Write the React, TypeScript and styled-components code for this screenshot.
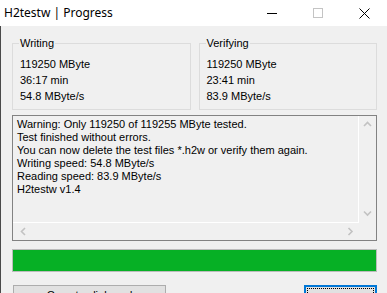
import React from 'react';
import styled, { createGlobalStyle } from 'styled-components';

const GlobalStyle = createGlobalStyle`
  html, body {
    margin: 0;
    padding: 0;
    background: #f0f0f0;
  }
  body {
    font-family: "Liberation Sans", Arial, sans-serif;
    font-size: 11px;
    color: #000;
  }
`;

const Window = styled.div`
  width: 387px;
  height: 293px;
  overflow: hidden;
  display: flex;
  flex-direction: column;
  background: #f0f0f0;
`;

const TitleBar = styled.div`
  height: 26px;
  flex: none;
  background: #fff;
  display: flex;
  align-items: center;
`;

const Title = styled.div`
  flex: 1;
  padding-left: 4px;
  font-family: "Noto Sans", "Open Sans", sans-serif;
  font-size: 12px;
  line-height: 26px;
  color: #000;
`;

const CaptionButton = styled.div`
  width: 46px;
  height: 26px;
  display: flex;
  align-items: center;
  justify-content: center;
`;

const Body = styled.div`
  flex: 1;
  border-left: 1px solid #4a4a4a;
  padding: 17px 10px 0 11px;
  display: flex;
  flex-direction: column;
`;

const GroupRow = styled.div`
  display: flex;
  gap: 8px;
`;

const Group = styled.div<{ $w: number }>`
  position: relative;
  width: ${(p) => p.$w}px;
  height: 67px;
  box-sizing: border-box;
  border: 1px solid #dcdcdc;
  padding: 12px 0 0 7px;
`;

const GroupLabel = styled.span`
  position: absolute;
  top: -8px;
  left: 6px;
  padding: 0 1px;
  background: #f0f0f0;
  line-height: 15px;
`;

const Line = styled.div`
  line-height: 16px;
  white-space: nowrap;
`;

const LogBox = styled.div`
  margin-top: 5px;
  height: 126px;
  box-sizing: border-box;
  border: 1px solid #828282;
  display: grid;
  grid-template-columns: 1fr 17px;
  grid-template-rows: 1fr 17px;
`;

const LogText = styled.div`
  padding: 2px 0 0 4px;
  border-right: 1px solid #fff;
  border-bottom: 1px solid #fff;
  overflow: hidden;
`;

const LogLine = styled.div`
  line-height: 13px;
  white-space: nowrap;
`;

const VScroll = styled.div`
  display: flex;
  flex-direction: column;
  justify-content: space-between;
  align-items: center;
  padding: 5px 0 6px;
`;

const HScroll = styled.div`
  display: flex;
  justify-content: space-between;
  align-items: center;
  padding: 0 5px 0 7px;
`;

const Progress = styled.div`
  margin-top: 8px;
  height: 23px;
  box-sizing: border-box;
  border: 1px solid #bcbcbc;
  background: #06b025;
`;

const ButtonRow = styled.div`
  margin-top: 13px;
  display: flex;
  justify-content: space-between;
  padding-left: 1px;
`;

const Button = styled.div<{ $w: number; $focus?: boolean }>`
  width: ${(p) => p.$w}px;
  height: 23px;
  box-sizing: border-box;
  background: #e1e1e1;
  border: ${(p) => (p.$focus ? '2px solid #0078d7' : '1px solid #adadad')};
  padding: ${(p) => (p.$focus ? '1px' : '0')};
  display: flex;
`;

const ButtonFace = styled.div<{ $focus?: boolean }>`
  flex: 1;
  border: 1px ${(p) => (p.$focus ? 'dotted #000' : 'solid transparent')};
  text-align: center;
  line-height: 17px;
`;

const Chevron = ({ dir }: { dir: 'up' | 'down' | 'left' | 'right' }) => {
  const paths = {
    up: 'M1 5 L4.5 1.5 L8 5',
    down: 'M1 1.5 L4.5 5 L8 1.5',
    left: 'M5 1 L1.5 4.5 L5 8',
    right: 'M1.5 1 L5 4.5 L1.5 8',
  };
  const horiz = dir === 'up' || dir === 'down';
  return (
    <svg width={horiz ? 9 : 7} height={horiz ? 7 : 9} viewBox={horiz ? '0 0 9 7' : '0 0 7 9'}>
      <path d={paths[dir]} fill="none" stroke="#c2c2c2" strokeWidth="1.6" />
    </svg>
  );
};

const log = [
  'Warning: Only 119250 of 119255 MByte tested.',
  'Test finished without errors.',
  'You can now delete the test files *.h2w or verify them again.',
  'Writing speed: 54.8 MByte/s',
  'Reading speed: 83.9 MByte/s',
  'H2testw v1.4',
];

export default function App() {
  return (
    <Window>
      <GlobalStyle />
      <TitleBar>
        <Title>H2testw | Progress</Title>
        <CaptionButton>
          <svg width="10" height="10" viewBox="0 0 10 10">
            <path d="M0 5.5 H10" stroke="#000" strokeWidth="1" />
          </svg>
        </CaptionButton>
        <CaptionButton>
          <svg width="10" height="10" viewBox="0 0 10 10">
            <rect x="0.5" y="0.5" width="9" height="9" fill="none" stroke="#c4c4c4" strokeWidth="1" />
          </svg>
        </CaptionButton>
        <CaptionButton>
          <svg width="11" height="11" viewBox="0 0 11 11">
            <path d="M0.5 0.5 L10.5 10.5 M10.5 0.5 L0.5 10.5" stroke="#000" strokeWidth="1" />
          </svg>
        </CaptionButton>
      </TitleBar>
      <Body>
        <GroupRow>
          <Group $w={179}>
            <GroupLabel>Writing</GroupLabel>
            <Line>119250 MByte</Line>
            <Line>36:17 min</Line>
            <Line>54.8 MByte/s</Line>
          </Group>
          <Group $w={179}>
            <GroupLabel>Verifying</GroupLabel>
            <Line>119250 MByte</Line>
            <Line>23:41 min</Line>
            <Line>83.9 MByte/s</Line>
          </Group>
        </GroupRow>
        <LogBox>
          <LogText>
            {log.map((l) => (
              <LogLine key={l}>{l}</LogLine>
            ))}
          </LogText>
          <VScroll>
            <Chevron dir="up" />
            <Chevron dir="down" />
          </VScroll>
          <HScroll>
            <Chevron dir="left" />
            <Chevron dir="right" />
          </HScroll>
          <div />
        </LogBox>
        <Progress />
        <ButtonRow>
          <Button $w={153}>
            <ButtonFace>Copy to clipboard</ButtonFace>
          </Button>
          <Button $w={73} $focus>
            <ButtonFace $focus>OK</ButtonFace>
          </Button>
        </ButtonRow>
      </Body>
    </Window>
  );
}
